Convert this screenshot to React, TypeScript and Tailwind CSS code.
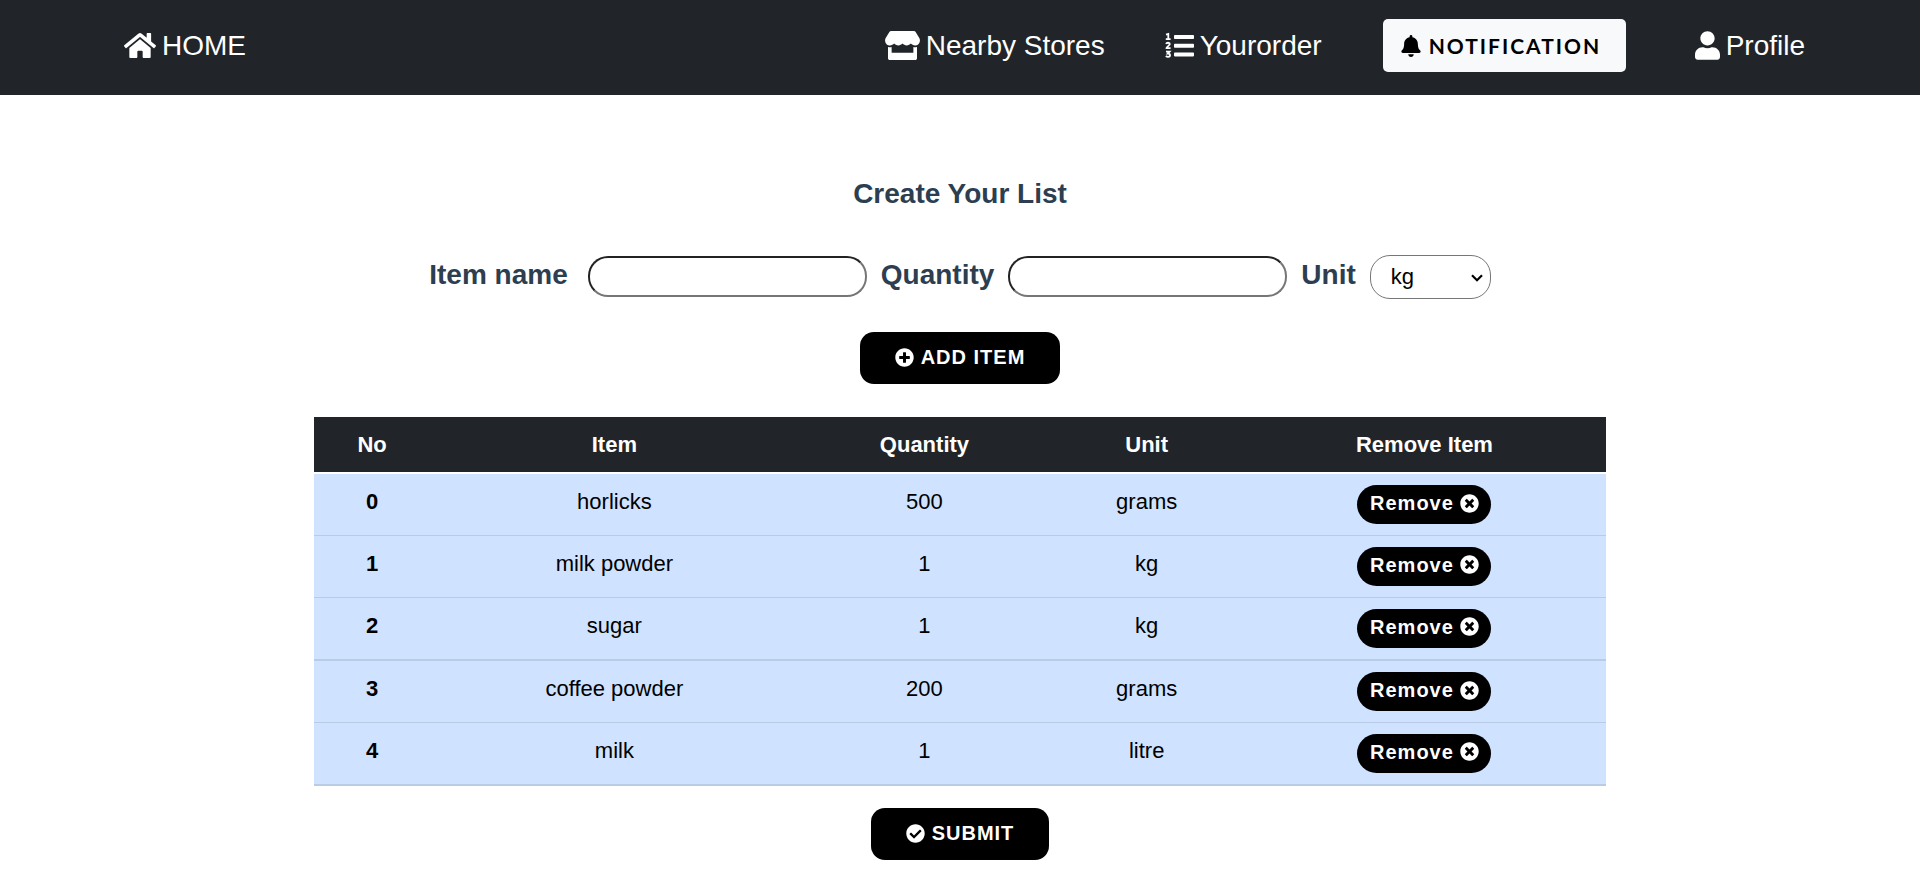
import { useState } from "react";
import type { ReactNode } from "react";
import {
  FaBell,
  FaCheckCircle,
  FaHome,
  FaPlusCircle,
  FaStore,
  FaTimesCircle,
  FaUser,
} from "react-icons/fa";

type Item = { name: string; quantity: string; unit: string };

const initialItems: Item[] = [
  { name: "horlicks", quantity: "500", unit: "grams" },
  { name: "milk powder", quantity: "1", unit: "kg" },
  { name: "sugar", quantity: "1", unit: "kg" },
  { name: "coffee powder", quantity: "200", unit: "grams" },
  { name: "milk", quantity: "1", unit: "litre" },
];

function NumberedListIcon() {
  return (
    <svg viewBox="0 0 29 29" className="size-[29px]" aria-hidden="true">
      <g fill="currentColor">
        <rect x="9" y="4" width="20" height="4" rx="0.8" />
        <rect x="9" y="12.7" width="20" height="4" rx="0.8" />
        <rect x="9" y="21.4" width="20" height="4" rx="0.8" />
      </g>
      <g fill="none" stroke="currentColor" strokeWidth="1.8">
        <path d="M1 3.6 3.3 2.9V8.2M0.8 8.2H5.6" />
        <path d="M1 12.8C1.8 11.3 4.8 11.4 4.8 13.1 4.8 14.6 1.5 15.6 1.5 17.1H5.6" />
        <path d="M1 20.6H4.6L2.8 22.6C5.9 22.5 5.6 25.8 3 25.8 2 25.8 1.4 25.5 0.8 25" />
      </g>
    </svg>
  );
}

function NavLink({ icon, children }: { icon: ReactNode; children: ReactNode }) {
  return (
    <a href="#" className="flex items-center gap-[6px] text-[28px] leading-9 text-white">
      {icon}
      {children}
    </a>
  );
}

const fieldClass =
  "mb-px h-[41px] w-[279px] rounded-[20px] border-2 border-t-[#222] border-l-[#222] border-r-[#767676] border-b-[#767676] bg-white px-4 text-[22px] text-black";

const actionClass =
  "flex h-[52px] items-center justify-center gap-[7px] rounded-[14px] bg-black pb-[2px] text-[20px] font-bold tracking-[1px] text-white";

export default function App() {
  const [items, setItems] = useState(initialItems);
  const [name, setName] = useState("");
  const [quantity, setQuantity] = useState("");
  const [unit, setUnit] = useState("kg");

  const addItem = () => {
    if (!name) return;
    setItems([...items, { name, quantity, unit }]);
    setName("");
    setQuantity("");
  };

  return (
    <div className="min-h-screen bg-white font-['Liberation_Sans',Arial,sans-serif] text-black">
      <nav className="flex h-[95px] items-center bg-[#212529] pr-[115px] pb-1 pl-[124px]">
        <NavLink icon={<FaHome className="h-[29px] w-8" />}>HOME</NavLink>
        <div className="ml-auto flex items-center">
          <NavLink icon={<FaStore className="h-[29px] w-[35px]" />}>Nearby Stores</NavLink>
          <div className="ml-[60px]">
            <NavLink icon={<NumberedListIcon />}>Yourorder</NavLink>
          </div>
          <button
            type="button"
            className="ml-[61px] flex h-[53px] w-[243px] items-center gap-2 rounded-[5px] bg-[#f8f9fa] pl-[18px] font-[Lato,'Open_Sans',sans-serif] text-[21px] font-bold tracking-[2px] text-black"
          >
            <FaBell className="h-[22px] w-5" />
            NOTIFICATION
          </button>
          <div className="ml-[69px]">
            <NavLink icon={<FaUser className="h-[29px] w-[25px]" />}>Profile</NavLink>
          </div>
        </div>
      </nav>

      <main className="flex flex-col items-center px-6 pt-[81px] pb-9">
        <h1 className="text-[28px] leading-9 font-bold text-[#2c3e50]">Create Your List</h1>

        <div className="mt-[43px] flex flex-wrap items-center justify-center text-[28px] leading-9 font-bold text-[#2c3e50]">
          <label htmlFor="item-name" className="mr-5 pb-1">
            Item name
          </label>
          <input
            id="item-name"
            className={fieldClass}
            value={name}
            onChange={(e) => setName(e.target.value)}
          />
          <label htmlFor="quantity" className="mx-[14px] pb-1">
            Quantity
          </label>
          <input
            id="quantity"
            className={fieldClass}
            value={quantity}
            onChange={(e) => setQuantity(e.target.value)}
          />
          <label htmlFor="unit" className="mx-[14px] pb-1">
            Unit
          </label>
          <div className="relative">
            <select
              id="unit"
              className="block h-11 w-[121px] appearance-none rounded-[20px] border border-[#767676] bg-white pl-5 text-[22px] font-normal text-black"
              value={unit}
              onChange={(e) => setUnit(e.target.value)}
            >
              <option>kg</option>
              <option>grams</option>
              <option>litre</option>
            </select>
            <svg
              viewBox="0 0 12 8"
              className="pointer-events-none absolute top-[19px] right-2 h-2 w-3 text-black"
              aria-hidden="true"
            >
              <path d="M1 1.2 6 6.2 11 1.2" fill="none" stroke="currentColor" strokeWidth="2.2" />
            </svg>
          </div>
        </div>

        <button type="button" className={`${actionClass} mt-[33px] w-[200px]`} onClick={addItem}>
          <FaPlusCircle className="size-[19px]" />
          ADD ITEM
        </button>

        <table className="mt-[33px] w-full max-w-[1292px] table-fixed border-collapse text-center text-[22px] leading-8">
          <colgroup>
            <col className="w-[9%]" />
            <col className="w-[28.5%]" />
            <col className="w-[19.5%]" />
            <col className="w-[14.9%]" />
            <col className="w-[28.1%]" />
          </colgroup>
          <thead>
            <tr className="h-14 border-b-2 border-white bg-[#212529] text-white">
              <th scope="col">No</th>
              <th scope="col">Item</th>
              <th scope="col">Quantity</th>
              <th scope="col">Unit</th>
              <th scope="col">Remove Item</th>
            </tr>
          </thead>
          <tbody>
            {items.map((item, index) => (
              <tr
                key={index}
                className="h-[62px] border-b border-[#bacbe6] bg-[#cfe2ff] align-top last:h-[63px] last:border-b-2 nth-3:h-[63px] nth-3:border-b-2"
              >
                <th scope="row" className="pt-3">
                  {index}
                </th>
                <td className="pt-3">{item.name}</td>
                <td className="pt-3">{item.quantity}</td>
                <td className="pt-3">{item.unit}</td>
                <td className="pt-[11px]">
                  <button
                    type="button"
                    className="mx-auto flex h-[39px] w-[134px] items-center justify-center gap-[6px] rounded-[20px] bg-black pb-[3px] text-[20px] font-bold tracking-[1px] text-white"
                    onClick={() => setItems(items.filter((_, i) => i !== index))}
                  >
                    Remove
                    <FaTimesCircle className="size-[19px]" />
                  </button>
                </td>
              </tr>
            ))}
          </tbody>
        </table>

        <button type="button" className={`${actionClass} mt-[22px] w-[178px]`}>
          <FaCheckCircle className="size-[19px]" />
          SUBMIT
        </button>
      </main>
    </div>
  );
}
